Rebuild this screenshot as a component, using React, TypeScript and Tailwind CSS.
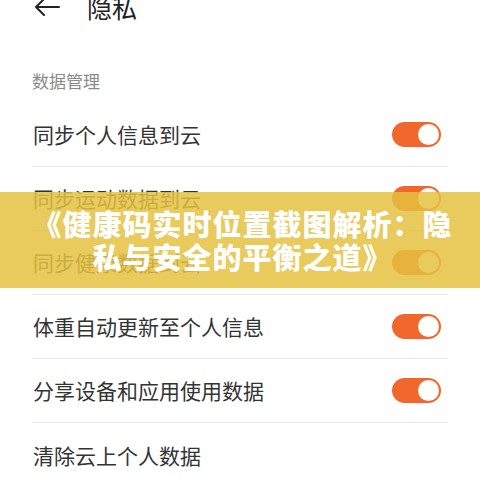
import React from "react";

const rows: { label: string; toggle: boolean }[] = [
  { label: "同步个人信息到云", toggle: true },
  { label: "同步运动数据到云", toggle: true },
  { label: "同步健康数据到云", toggle: true },
  { label: "体重自动更新至个人信息", toggle: true },
  { label: "分享设备和应用使用数据", toggle: true },
  { label: "清除云上个人数据", toggle: false },
];

function Toggle() {
  return (
    <div className="w-[49px] h-[25px] rounded-full bg-[#f2672b] p-[2px] flex justify-end items-center">
      <div className="w-[21px] h-[21px] rounded-full bg-white" />
    </div>
  );
}

export default function App() {
  return (
    <div
      className="relative w-[480px] h-[480px] overflow-hidden bg-white"
      style={{ fontFamily: '"Noto Sans CJK SC", "Noto Sans", sans-serif' }}
    >
      <div className="flex items-center h-[50px] -mt-[18px] pl-[33px]">
        <svg width="28" height="20" viewBox="0 0 28 20" fill="none" stroke="#222" strokeWidth="2" strokeLinecap="round" strokeLinejoin="round">
          <path d="M26 10H3M11 2L3 10l8 8" />
        </svg>
        <span className="ml-[26px] text-[25px] text-[#222] leading-none">隐私</span>
      </div>
      <div className="px-8">
        <div className="h-[71px] flex items-end pb-[14px] text-[17px] text-[#8a8a8a] leading-none">
          数据管理
        </div>
        {rows.map((r, i) => (
          <div
            key={i}
            className={`h-[64px] flex items-center justify-between ${i < rows.length - 1 ? "border-b border-[#e8e8e8]" : ""}`}
          >
            <span className="text-[21px] text-[#333] leading-none pl-[1px]">{r.label}</span>
            {r.toggle && (
              <div className="mr-[7px]">
                <Toggle />
              </div>
            )}
          </div>
        ))}
      </div>
      <div className="absolute left-0 right-0 top-[192px] h-[96px] bg-[#e5c13f]/85 flex flex-col items-center justify-center pl-[5px]">
        <div className="text-white font-black text-[29px] leading-[33px] tracking-[1px] text-center whitespace-nowrap">
          《健康码实时位置截图解析：隐
        </div>
        <div className="text-white font-black text-[29px] leading-[33px] tracking-[1px] text-center whitespace-nowrap">
          私与安全的平衡之道》
        </div>
      </div>
    </div>
  );
}
